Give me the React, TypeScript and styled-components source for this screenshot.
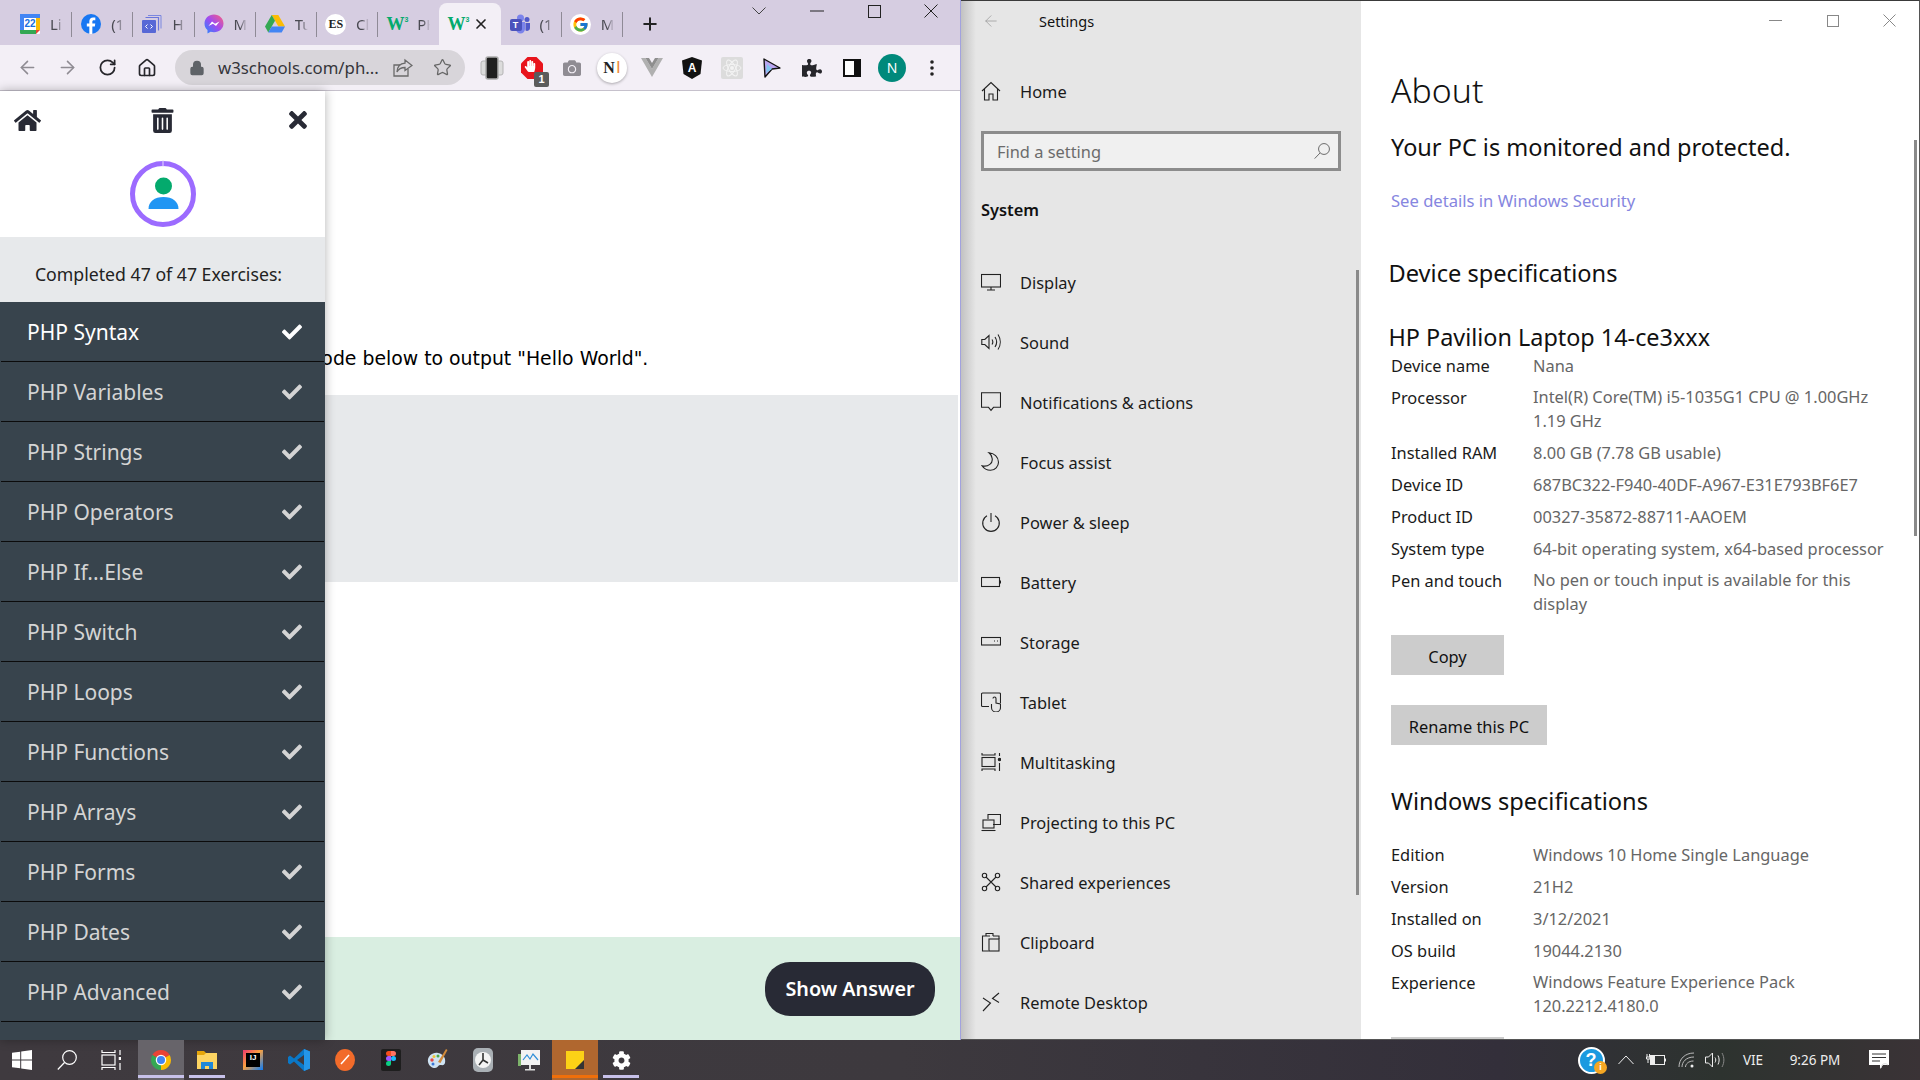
import React from "react";
import styled, { createGlobalStyle } from "styled-components";
import { FaHome, FaTrashAlt, FaTimes, FaCheck, FaPuzzlePiece, FaCamera, FaHandPaper, FaCog } from "react-icons/fa";
import { FcGoogle } from "react-icons/fc";
import { ArrowLeft, ArrowRight, RotateCw, Home as HomeLine, Star, Lock, Plus, X } from "lucide-react";

const Global = createGlobalStyle`
  html, body { margin: 0; padding: 0; background: #fff; overflow: hidden; }
  * { box-sizing: border-box; }
  #root { width: 1920px; height: 1080px; }
`;

const Screen = styled.div`
  width: 1920px; height: 1080px; display: flex; flex-direction: column; overflow: hidden;
  font-family: "Noto Sans", "Open Sans", sans-serif;
`;
const Desktop = styled.div`display: flex; height: 1040px;`;

/* ---------- Chrome ---------- */
const ChromeWindow = styled.div`
  width: 961px; flex: none; display: flex; flex-direction: column; border-right: 1px solid #a2a2de; position: relative;
`;
const TabStrip = styled.div`height: 45px; flex: none; background: #d6cde1; display: flex; padding: 3px 0 0 11px;`;
const Tab = styled.div<{ $active?: boolean }>`
  width: 61.2px; flex: none; display: flex; align-items: center; position: relative; padding-left: 9px; height: 42px;
  ${(p) => p.$active ? `background:#f3eff6; border-radius:8px 8px 0 0;` : ``}
`;
const TabDivider = styled.span`
  position: absolute; right: 0; top: 9px; height: 25px; width: 1px; background: #8f8a96;
`;
const TabIcon = styled.span`width: 20px; height: 20px; flex: none; display: flex; align-items: center; justify-content: center; position: relative;`;
const TabTitle = styled.span`
  margin-left: 10px; white-space: nowrap; font-size: 15px; color: #4a4a52;
  -webkit-mask-image: linear-gradient(to right, #000 6px, transparent 13px);
  mask-image: linear-gradient(to right, #000 6px, transparent 13px);
`;
const TabClose = styled.span`margin-left: 5px; display: flex; color: #222;`;
const NewTab = styled.span`width: 54px; display: flex; align-items: center; justify-content: center; color: #222;`;
const ChromeControls = styled.div`margin: -3px 0 0 auto; display: flex; height: 22px;`;
const ChromeControl = styled.span`width: 57.3px; display: flex; align-items: center; justify-content: center; color: #222;`;

const Toolbar = styled.div`
  height: 46px; flex: none; background: #f3eff6; border-bottom: 1px solid #c6c1cc; display: flex; align-items: center; padding-left: 7px;
`;
const ToolButton = styled.span<{ $muted?: boolean }>`
  width: 40px; height: 40px; flex: none; display: flex; align-items: center; justify-content: center; position: relative;
  color: ${(p) => (p.$muted ? "#8f8c93" : "#26262b")};
`;
const Omnibox = styled.div`
  width: 290px; height: 35px; margin: 0 7px 0 8px; border-radius: 18px; background: #d8d5da; display: flex; align-items: center; padding: 0 13px 0 14px; flex: none; color: #5f6368;
`;
const LockSlot = styled.span`width: 16px; flex: none; display: flex;`;
const Url = styled.span`flex: 1 1 0; min-width: 0; margin-left: 13px; font-size: 16.8px; color: #35353a; white-space: nowrap;`;
const OmniAction = styled.span`width: 20px; flex: none; display: flex; justify-content: center; margin-left: 19px; color: #666;`;
const Badge = styled.span`
  position: absolute; left: 22px; top: 24px; width: 15px; height: 15px; background: #5b5b5b; border-radius: 2px; color: #fff;
  font: 700 11px/15px "Liberation Sans", sans-serif; text-align: center;
`;
const NotionDisc = styled.span`
  width: 30px; height: 30px; border-radius: 50%; background: #fff; box-shadow: 0 1px 3px rgba(0,0,0,.3); display: flex; align-items: center; justify-content: center;
  font: 700 16px "Liberation Serif", serif; color: #222;
`;
const OrangeBar = styled.span`color: #f08a3c; font: 400 17px "Liberation Sans", sans-serif; margin-left: 1px;`;
const Avatar = styled.span`
  width: 28px; height: 28px; border-radius: 50%; background: #00897b; color: #fff; display: flex; align-items: center; justify-content: center; font-size: 14px;
`;

const Page = styled.div`flex: 1; display: flex; flex-direction: column; background: #fff; overflow: hidden;`;
const Instruction = styled.p`
  margin: 256px 0 24px; padding-left: 30px; height: 24px; font: 400 18.85px/24px "DejaVu Sans", sans-serif; color: #000; white-space: nowrap;
`;
const CodeBox = styled.div`height: 187px; margin-right: 2px; background: #e7e9eb; flex: none;`;
const Footer = styled.div`
  margin-top: auto; height: 103px; flex: none; background: #d9eee1; display: flex; align-items: center; justify-content: flex-end; padding-right: 25px;
`;
const AnswerButton = styled.button`
  width: 170px; height: 54px; border: 0; border-radius: 25px; background: #282a35; color: #fff; font: 600 19.8px "Noto Sans", sans-serif; padding: 0;
`;

/* ---------- W3 sidebar ---------- */
const Sidebar = styled.aside`
  position: absolute; left: 0; top: 91px; bottom: 0; width: 325px; background: #38444d; display: flex; flex-direction: column; overflow: hidden;
  box-shadow: 0 0 10px rgba(0,0,0,.3);
`;
const SideTools = styled.div`
  height: 59px; background: #fff; display: grid; grid-template-columns: 55px 1fr 55px; align-items: center; justify-items: center; color: #282a35; padding-bottom: 1px;
`;
const ProfileArea = styled.div`height: 87px; background: #fff; display: flex; justify-content: center; align-items: flex-start; padding-top: 10px;`;
const Progress = styled.div`
  height: 65px; background: #e7e9eb; display: flex; align-items: center; justify-content: center; font-size: 17.7px; color: #222; padding: 9px 8px 0 0;
`;
const Chapter = styled.div<{ $first?: boolean }>`
  height: 60px; flex: none; display: flex; align-items: center; justify-content: space-between; padding: 0 23px 1px 27px; position: relative;
  color: ${(p) => (p.$first ? "#fff" : "#d4d4d4")}; font-size: 21px;
  &::after { content: ""; position: absolute; left: 1px; right: 1px; bottom: 0; height: 1px; background: #0b0b0b; }
`;

/* ---------- Settings ---------- */
const SettingsWindow = styled.div`
  flex: 1; display: flex; border-top: 1px solid #3a3a3a; border-right: 1px solid #555; border-bottom: 1px solid #555; overflow: hidden; color: #111;
`;
const SettingsNav = styled.nav`
  width: 400px; flex: none; position: relative; overflow: hidden;
  background: linear-gradient(to right, #c2c2c2, #e6e6e6 15px);
`;
const TitleBar = styled.div`height: 41px; display: flex; align-items: center; padding: 0 0 2px 20px; font-size: 14.5px;`;
const BackArrow = styled.span`width: 58px; display: flex; color: #9a9a9a; padding-left: 1px;`;
const NavRow = styled.div`
  height: 60px; display: flex; align-items: center; padding: 0 0 2px 20px; font-size: 16.4px; color: #1a1a1a; gap: 19px;
`;
const NavGlyph = styled.svg`width: 20px; height: 20px; flex: none; margin-top: -1px; fill: none; stroke: #222; stroke-width: 1.1;`;
const HomeSlot = styled.div`margin-top: 20px;`;
const SearchBox = styled.div`
  margin: 9px 0 0 20px; width: 360px; height: 40px; border: 3px solid #8c8c8c; background: #f0f0f0; display: flex; align-items: center; justify-content: space-between; padding: 0 8px 0 13px; color: #6b6b6b; font-size: 16.4px;
`;
const SectionLabel = styled.div`margin: 19px 0 23px 20px; height: 40px; line-height: 40px; font-size: 16.4px; font-weight: 600; color: #111;`;
const NavScroll = styled.span`position: absolute; left: 395px; top: 269px; width: 3px; height: 625px; background: #8a8a8a;`;

const AboutPane = styled.main`flex: 1; background: #fff; padding-left: 30px; position: relative; overflow: hidden;`;
const WinControls = styled.div`height: 41px; display: flex; justify-content: flex-end; align-items: center; color: #8a8a8a; padding: 0 1px 2px 0;`;
const WinControl = styled.span`width: 57px; display: flex; justify-content: center;`;
const AboutTitle = styled.h1`margin: 23px 0 0; height: 50px; font-size: 33.8px; line-height: 50px; font-weight: 300; color: #111;`;
const Protected = styled.div`margin-top: 14px; height: 36px; line-height: 36px; font-size: 23.5px; color: #111;`;
const DetailsLink = styled.a`display: block; margin-top: 24px; height: 24px; line-height: 24px; font-size: 16.6px; color: #8686e0;`;
const SpecHeading = styled.h2<{ $shift?: boolean }>`
  margin: ${(p) => (p.$shift ? "42px 0 0 -2.5px" : "38px 0 0")}; height: 36px; line-height: 36px; font-size: 23.6px; font-weight: 400; color: #111;
`;
const ModelName = styled.div`margin: 28px 0 -1px -2.5px; height: 36px; line-height: 36px; font-size: 23.4px; color: #111;`;
const SpecList = styled.dl<{ $gapTop?: number }>`
  margin: ${(p) => p.$gapTop ?? 0}px 0 0; display: flex; flex-direction: column; gap: 8px;
`;
const SpecRow = styled.div`display: grid; grid-template-columns: 142px 1fr; font-size: 16.4px; line-height: 24px;`;
const SpecLabel = styled.dt`color: #1a1a1a;`;
const SpecValue = styled.dd<{ $multi?: boolean }>`margin: ${(p) => (p.$multi ? "-1px 0 0" : "0")}; color: #666;`;
const GrayButton = styled.button<{ $w: number; $top: number }>`
  display: block; width: ${(p) => p.$w}px; height: 40px; margin-top: ${(p) => p.$top}px; border: 0; background: #ccc; color: #111; font: 400 16.4px "Noto Sans", sans-serif; padding: 2px 0 0;
`;
const PaneScroll = styled.span`position: absolute; right: 2px; top: 139px; width: 3px; height: 396px; background: #8a8a8a;`;

/* ---------- Taskbar ---------- */
const Taskbar = styled.footer`
  height: 40px; flex: none; display: flex; align-items: stretch; color: #eee;
  background: linear-gradient(to right, #3f3a3f 0, #3d393e 900px, #332f3a 1500px, #2d332f 1720px, #3a3336 1920px);
`;
const SystemSlot = styled.span`width: 44.5px; display: flex; align-items: center; justify-content: center; flex: none;`;
const AppSlot = styled.span<{ $tone?: "focus" | "alert"; $running?: boolean }>`
  width: 46px; flex: none; display: flex; align-items: center; justify-content: center; position: relative;
  background: ${(p) => (p.$tone === "focus" ? "#67646a" : p.$tone === "alert" ? "#b0672f" : "transparent")};
  ${(p) => p.$running ? `&::after{content:"";position:absolute;bottom:2px;height:3px;left:${p.$tone ? 0 : 5}px;right:${p.$tone ? 0 : 5}px;background:${p.$tone === "alert" ? "#f06f0a" : "#c7c1ea"};}` : ""}
`;
const AppStrip = styled.div`display: flex; margin-left: 4.5px;`;
const Tray = styled.div`margin-left: auto; display: flex; padding-right: 11px; font-size: 13.5px;`;
const TraySlot = styled.span<{ $w: number }>`width: ${(p) => p.$w}px; display: flex; align-items: center; justify-content: center; position: relative; white-space: nowrap;`;
const HelpDisc = styled.span`
  width: 27px; height: 27px; border-radius: 50%; background: #1b9ae0; border: 2px solid #fff; color: #fff; display: flex; align-items: center; justify-content: center; font: 700 18px "Liberation Sans", sans-serif; flex: none;
`;
const HelpBadge = styled.span`
  position: absolute; left: 21px; bottom: 6px; width: 13px; height: 13px; border-radius: 50%; background: #f5a623; color: #fff; font: 700 9px/13px "Liberation Sans", sans-serif; text-align: center;
`;
const IdeTile = styled.span`
  width: 20px; height: 20px; background: linear-gradient(135deg,#f0376f,#f9a03f 45%,#087cfa); display: flex; align-items: center; justify-content: center; padding: 3px;
`;
const IdeCore = styled.span`width: 100%; height: 100%; background: #000; color: #fff; font: 700 8px/10px "Liberation Sans", sans-serif; text-align: center;`;

/* W3 / logos made of live text */
const W3Mark = styled.span`
  color: #04aa6d; font: 900 18px/20px "Liberation Serif", serif; letter-spacing: -.5px; display: flex;
`;
const W3Sup = styled.sup`font-size: 7px; line-height: 9px; margin: 1px 0 0 .5px; vertical-align: top; font-family: "Liberation Sans", sans-serif;`;
const EsDisc = styled.span`
  width: 21px; height: 21px; border-radius: 50%; background: #fff; color: #222; font: 900 12px/21px "Liberation Serif", serif; text-align: center; flex: none;
`;
const GoogleDisc = styled.span`
  width: 21px; height: 21px; border-radius: 50%; background: #fff; display: flex; align-items: center; justify-content: center; flex: none;
`;
const CalendarDay = styled.span`
  position: absolute; left: 4px; top: 4px; width: 12px; height: 12px; color: #1a6fe0; font: 700 10px/12px "Liberation Sans", sans-serif; text-align: center;
`;
const ShieldLetter = styled.span`
  position: absolute; inset: 0; display: flex; align-items: center; justify-content: center; color: #fff; font: 700 12px "Liberation Sans", sans-serif;
`;
const TeamsLetter = styled.span`
  position: absolute; left: 0; top: 5px; width: 12px; height: 12px; background: #4b53bc; border-radius: 2px; color: #fff; font: 700 9px/12px "Liberation Sans", sans-serif; text-align: center;
`;
const HandOverlay = styled.span`position: absolute; left: 12px; top: 12px; color: #fff; display: flex;`;

const CalendarIcon = () => (
  <TabIcon>
    <svg width="20" height="20" viewBox="0 0 20 20">
      <rect width="20" height="20" rx="1" fill="#fff" />
      <path d="M0 0h20v4H4v12H0z" fill="#4285f4" />
      <path d="M16 4h4v12h-4z" fill="#fbbc04" />
      <path d="M0 16h16v4H1a1 1 0 0 1-1-1z" fill="#34a853" />
      <path d="M16 16h4l-4 4z" fill="#ea4335" />
    </svg>
    <CalendarDay>22</CalendarDay>
  </TabIcon>
);
const FacebookIcon = () => (
  <TabIcon>
    <svg width="20" height="20" viewBox="0 0 24 24">
      <circle cx="12" cy="12" r="12" fill="#1877f2" />
      <path d="M13.600 24v-9h3l.5-3.600h-3.500V9.300c0-1.100.4-1.800 1.800-1.800h1.800V4.300c-.4 0-1.400-.2-2.700-.2-2.700 0-4.500 1.600-4.500 4.700v2.600H7v3.600h3V24z" fill="#fff" />
    </svg>
  </TabIcon>
);
const StackIcon = () => (
  <TabIcon>
    <svg width="20" height="20" viewBox="0 0 20 20">
      <path d="M6 1.500h13v13" fill="none" stroke="#7b87e0" strokeWidth="1" />
      <path d="M3.500 3.500h13v13" fill="none" stroke="#6a76dc" strokeWidth="1.200" />
      <rect x="0" y="6" width="14" height="13" rx="1" fill="#5868d6" />
      <path d="M5.500 10.500 3.500 12.500l2 2M8.500 10.500l2 2-2 2" fill="none" stroke="#fff" strokeWidth="1" />
    </svg>
  </TabIcon>
);
const MessengerIcon = () => (
  <TabIcon>
    <svg width="20" height="20" viewBox="0 0 20 20">
      <defs>
        <linearGradient id="msg" x1="0" y1="1" x2="1" y2="0">
          <stop offset="0" stopColor="#1e8bff" />
          <stop offset=".5" stopColor="#a04bf0" />
          <stop offset="1" stopColor="#ff5f7a" />
        </linearGradient>
      </defs>
      <path d="M10 .5C4.600.5.500 4.400.500 9.500c0 2.700 1.100 5 3 6.600V19.500l3.100-1.700c1 .3 2.200.4 3.400.4 5.400 0 9.500-3.900 9.500-8.700S15.400.5 10 .5z" fill="url(#msg)" />
      <path d="m4.500 12 3.500-4.500 3 2.300L15.500 7.500 12 12 9 9.700z" fill="#fff" />
    </svg>
  </TabIcon>
);
const DriveIcon = () => (
  <TabIcon>
    <svg width="20" height="18" viewBox="0 0 20 18">
      <path d="M6.700 0h6.600l6.700 11.500h-6.600z" fill="#fbbc04" />
      <path d="M6.700 0 0 11.500 3.300 17.500 10 5.700z" fill="#34a853" />
      <path d="M6.700 11.500H20l-3.300 6H3.300z" fill="#4285f4" />
    </svg>
  </TabIcon>
);
const W3Icon = () => (
  <TabIcon>
    <W3Mark>W<W3Sup>3</W3Sup></W3Mark>
  </TabIcon>
);
const EsIcon = () => (
  <TabIcon>
    <EsDisc>ES</EsDisc>
  </TabIcon>
);
const TeamsIcon = () => (
  <TabIcon>
    <svg width="20" height="20" viewBox="0 0 20 20">
      <circle cx="10.500" cy="4" r="3.500" fill="#7b83eb" />
      <circle cx="17" cy="5.500" r="2.500" fill="#5059c9" />
      <path d="M6 8h9v7a4.500 4.500 0 0 1-9 0z" fill="#7b83eb" />
      <path d="M15.500 9H20v5a3 3 0 0 1-4.500 2.600z" fill="#5059c9" />
    </svg>
    <TeamsLetter>T</TeamsLetter>
  </TabIcon>
);
const GoogleIcon = () => (
  <TabIcon>
    <GoogleDisc><FcGoogle size={17} /></GoogleDisc>
  </TabIcon>
);

const tabs: { icon: React.ReactNode; title?: string; active?: boolean; divider?: boolean }[] = [
  { icon: <CalendarIcon />, title: "Li", divider: true },
  { icon: <FacebookIcon />, title: "(1", divider: true },
  { icon: <StackIcon />, title: "H", divider: true },
  { icon: <MessengerIcon />, title: "M", divider: true },
  { icon: <DriveIcon />, title: "Tu", divider: true },
  { icon: <EsIcon />, title: "Cl", divider: true },
  { icon: <W3Icon />, title: "PH", divider: false },
  { icon: <W3Icon />, active: true },
  { icon: <TeamsIcon />, title: "(1", divider: true },
  { icon: <GoogleIcon />, title: "M", divider: true },
];

/* toolbar extension drawings */
const PhoneExt = () => (
  <svg width="24" height="24" viewBox="0 0 24 24">
    <rect x="1" y="5" width="22" height="14" rx="2" fill="#dcdcdc" stroke="#b5b5b5" />
    <rect x="6" y="1" width="12" height="22" rx="2" fill="#1f1f1f" stroke="#aaa" strokeWidth="1.500" />
  </svg>
);
const StopExt = () => (
  <>
    <svg width="22" height="22" viewBox="0 0 22 22">
      <path d="M6.500 0h9L22 6.500v9L15.500 22h-9L0 15.500v-9z" fill="#e8141c" />
    </svg>
    <HandOverlay><FaHandPaper size={12} /></HandOverlay>
    <Badge>1</Badge>
  </>
);
const VueExt = () => (
  <svg width="22" height="20" viewBox="0 0 22 20">
    <path d="M0 0h4.500L11 11 17.500 0H22L11 19z" fill="#b0b0b0" />
    <path d="M4.500 0H8l3 5 3-5h3.500L11 11z" fill="#8e8e8e" />
  </svg>
);
const AngularExt = () => (
  <>
    <svg width="20" height="22" viewBox="0 0 20 22">
      <path d="M10 0 20 3.500 18.500 17 10 22 1.500 17 0 3.500z" fill="#111" />
    </svg>
    <ShieldLetter>A</ShieldLetter>
  </>
);
const ReactExt = () => (
  <svg width="22" height="22" viewBox="0 0 22 22">
    <rect width="22" height="22" rx="2" fill="#dcdcdc" />
    <g fill="none" stroke="#f3f3f3" strokeWidth="1">
      <ellipse cx="11" cy="11" rx="9" ry="3.500" />
      <ellipse cx="11" cy="11" rx="9" ry="3.500" transform="rotate(60 11 11)" />
      <ellipse cx="11" cy="11" rx="9" ry="3.500" transform="rotate(120 11 11)" />
    </g>
    <circle cx="11" cy="11" r="2" fill="#f3f3f3" />
  </svg>
);
const CursorExt = () => (
  <svg width="18" height="20" viewBox="0 0 18 20">
    <path d="M1 1 17 10 9 11 2 19z" fill="#b9a6f0" stroke="#111" strokeWidth="1.400" strokeLinejoin="round" />
    <path d="M3 15 9 11 4 6z" fill="#7fc6f0" />
  </svg>
);
const SidePanelExt = () => (
  <svg width="18" height="18" viewBox="0 0 18 18">
    <rect x="1" y="1" width="16" height="16" fill="#fff" stroke="#111" strokeWidth="2" />
    <rect x="11" y="1" width="6" height="16" fill="#111" />
  </svg>
);
const DotsExt = () => (
  <svg width="4" height="16" viewBox="0 0 4 16" fill="#222">
    <circle cx="2" cy="2" r="1.800" /><circle cx="2" cy="8" r="1.800" /><circle cx="2" cy="14" r="1.800" />
  </svg>
);
const ShareGlyph = () => (
  <svg width="20" height="20" viewBox="0 0 20 20" fill="none" stroke="#6a6a6a" strokeWidth="1.300">
    <path d="M15 11v7H1V7h6" />
    <path d="M12 2l7 5.500-7 5V9.500C8 9.500 5.500 11 4 14c.3-5 3-8.500 8-8.800z" />
  </svg>
);

/* profile ring */
const ProfileRing = () => (
  <svg width="68" height="68" viewBox="0 0 68 68">
    <circle cx="34" cy="34" r="30.500" fill="none" stroke="#9c6bff" strokeWidth="5" />
    <rect x="33.500" y="0" width="1" height="7" fill="#e8dcff" />
    <circle cx="34.500" cy="26" r="8.500" fill="#04aa6d" />
    <path d="M19.500 49c0-7.500 6-12 15-12s15 4.500 15 12z" fill="#2196f3" />
  </svg>
);

/* settings nav glyphs */
const glyphs: Record<string, React.ReactNode> = {
  home: <path d="M1 10 10 1.500 19 10M3.500 8v11H8v-6h4v6h4.500V8" />,
  display: <><rect x=".5" y="2.500" width="19" height="12.500" /><path d="M10 15v2.500M6 18h8" /></>,
  sound: <><path d="M.8 7.500h3L8 3.500v13l-4.200-4h-3z" /><path d="M11 7.500c1 1.500 1 3.500 0 5M14 5c2 3 2 7 0 10M17 2.500c3 4.500 3 10.500 0 15" /></>,
  notify: <path d="M.5 .8h19v14.500h-7l-2.500 3-2.500-3h-7z" />,
  focus: <path d="M8 .8c5 .5 9.500 4 9.500 9.500 0 4-3.500 8-8 8-3.500 0-6.500-1.500-8.500-4.500 6 1.500 11.500-2.500 10-8-.5-2-1.500-3.800-3-5z" />,
  power: <><path d="M10 1v9" /><path d="M6 3.800a8.300 8.300 0 1 0 8 0" /></>,
  battery: <><rect x=".5" y="5.500" width="18" height="9" /><path d="M19.500 8.500v3" /></>,
  storage: <><rect x=".5" y="5.500" width="19" height="7.500" /><path d="M13 9h1M16 9h1" /></>,
  tablet: <><path d="M8 14.500H1.500a1 1 0 0 1-1-1V2a1 1 0 0 1 1-1h17a1 1 0 0 1 1 1v9" /><path d="M12 6.500a1.500 1.500 0 0 1 3 0V11l4.500 1v3.500a4.500 4.500 0 0 1-9 0V12" /></>,
  multi: <><path d="M1 1v2h13V1M1 19v-2h13v2" /><rect x="1" y="5.500" width="13" height="9" /><path d="M18.500 1v3M18.500 11v8" /><circle cx="18.500" cy="7.500" r="1.200" fill="#222" /></>,
  project: <><path d="M7 7V2.500h12.500v10H12" /><rect x="2" y="8" width="11" height="8" /><path d="M.5 18.500h14" /></>,
  shared: <><path d="M5 5l10 10M15 5 5 15" /><circle cx="3.500" cy="3.500" r="2.200" /><circle cx="16.500" cy="3.500" r="2.200" /><circle cx="3.500" cy="16.500" r="2.200" /><circle cx="16.500" cy="16.500" r="2.200" /></>,
  clipboard: <><path d="M9 4H1.500v15h6M5 4V1.500h7V4" /><rect x="8" y="7" width="10" height="12" /><path d="M12 4h6v3" /></>,
  remote: <path d="M2 6 9.500 11 2 19M18 1l-6.500 5.500 6.500 4" />,
};
const NavIcon = ({ name }: { name: string }) => <NavGlyph viewBox="0 0 20 20">{glyphs[name]}</NavGlyph>;

const navItems: [string, string][] = [
  ["display", "Display"], ["sound", "Sound"], ["notify", "Notifications & actions"], ["focus", "Focus assist"],
  ["power", "Power & sleep"], ["battery", "Battery"], ["storage", "Storage"], ["tablet", "Tablet"],
  ["multi", "Multitasking"], ["project", "Projecting to this PC"], ["shared", "Shared experiences"],
  ["clipboard", "Clipboard"], ["remote", "Remote Desktop"],
];
const chapters = ["PHP Syntax", "PHP Variables", "PHP Strings", "PHP Operators", "PHP If...Else", "PHP Switch", "PHP Loops", "PHP Functions", "PHP Arrays", "PHP Forms", "PHP Dates", "PHP Advanced"];

const deviceSpecs: [string, React.ReactNode, boolean?][] = [
  ["Device name", "Nana"],
  ["Processor", <>Intel(R) Core(TM) i5-1035G1 CPU @ 1.00GHz<br />1.19 GHz</>, true],
  ["Installed RAM", "8.00 GB (7.78 GB usable)"],
  ["Device ID", "687BC322-F940-40DF-A967-E31E793BF6E7"],
  ["Product ID", "00327-35872-88711-AAOEM"],
  ["System type", "64-bit operating system, x64-based processor"],
  ["Pen and touch", <>No pen or touch input is available for this<br />display</>, true],
];
const windowsSpecs: [string, React.ReactNode, boolean?][] = [
  ["Edition", "Windows 10 Home Single Language"],
  ["Version", "21H2"],
  ["Installed on", "3/12/2021"],
  ["OS build", "19044.2130"],
  ["Experience", <>Windows Feature Experience Pack<br />120.2212.4180.0</>, true],
];

const Specs = ({ rows, top }: { rows: [string, React.ReactNode, boolean?][]; top?: number }) => (
  <SpecList $gapTop={top}>
    {rows.map(([k, v, multi]) => (
      <SpecRow key={k}>
        <SpecLabel>{k}</SpecLabel>
        <SpecValue $multi={multi}>{v}</SpecValue>
      </SpecRow>
    ))}
  </SpecList>
);

/* taskbar drawings */
const WinLogo = () => (
  <svg width="20" height="20" viewBox="0 0 20 20" fill="#fff">
    <path d="M0 2.800 8.200 1.700v7.800H0zM9.200 1.500 20 0v9.500H9.200zM0 10.500h8.200v7.800L0 17.200zM9.200 10.500H20V20L9.200 18.500z" />
  </svg>
);
const SearchGlyph = ({ size = 20, color = "#fff" }: { size?: number; color?: string }) => (
  <svg width={size} height={size} viewBox="0 0 20 20" fill="none" stroke={color} strokeWidth="1.200">
    <circle cx="12.500" cy="7.500" r="6.800" /><path d="M7.500 12.500 .8 19.500" />
  </svg>
);
const TaskViewGlyph = () => (
  <svg width="20" height="20" viewBox="0 0 20 20" fill="none" stroke="#fff" strokeWidth="1.200">
    <path d="M1 0v2.500h13V0M1 20v-2.500h13V20" /><rect x="1" y="5" width="13" height="10" /><path d="M19 0v5M19 13v7" /><path d="M19 7v3" strokeWidth="2.500" />
  </svg>
);
const ChromeLogo = () => (
  <svg width="24" height="24" viewBox="0 0 48 48">
    <path d="M24 24 6.700 14A20 20 0 0 1 41.300 14z" fill="#ea4335" />
    <path d="M24 24 41.300 14A20 20 0 0 1 24 44z" fill="#fbbc04" />
    <path d="M24 24V44A20 20 0 0 1 6.700 14z" fill="#34a853" />
    <circle cx="24" cy="24" r="10.500" fill="#fff" /><circle cx="24" cy="24" r="8" fill="#4285f4" />
  </svg>
);
const FilesLogo = () => (
  <svg width="20" height="20" viewBox="0 0 20 20">
    <path d="M0 1h7l2 2h-9z" fill="#e5a50a" />
    <rect y="3" width="20" height="16" fill="#fcd462" />
    <path d="M0 3h9l-2 2H0z" fill="#e5a50a" />
    <path d="M4 19v-7h12v7h-4v-3H8v3z" fill="#1e88d8" />
  </svg>
);
const VsCodeLogo = () => (
  <svg width="22" height="22" viewBox="0 0 22 22">
    <path d="M16 0 22 2.500v17L16 22 6 12.500 2 15.500 0 14V8l2-1.500 4 3z" fill="#0a78c8" />
    <path d="M16 6 9 11l7 5z" fill="#3d3a3f" />
    <path d="M16 0 22 2.500v17L16 22z" fill="#2496e8" />
  </svg>
);
const SlashLogo = () => (
  <svg width="20" height="22" viewBox="0 0 20 22">
    <ellipse cx="10" cy="11" rx="10" ry="11" fill="#f26b2a" />
    <path d="M6 15 14 6" stroke="#fff" strokeWidth="1.500" />
  </svg>
);
const FigmaLogo = () => (
  <svg width="20" height="22" viewBox="0 0 20 22">
    <rect width="20" height="22" rx="2" fill="#1e1e1e" />
    <path d="M10 2H7.500a2.500 2.500 0 0 0 0 5H10z" fill="#f24e1e" />
    <path d="M10 2h2.500a2.500 2.500 0 0 1 0 5H10z" fill="#ff7262" />
    <path d="M10 7H7.500a2.500 2.500 0 0 0 0 5H10z" fill="#a259ff" />
    <circle cx="12.500" cy="9.500" r="2.500" fill="#1abcfe" />
    <path d="M10 12H7.500a2.500 2.500 0 1 0 2.500 2.500z" fill="#0acf83" />
  </svg>
);
const PaletteLogo = () => (
  <svg width="22" height="24" viewBox="0 0 22 24">
    <path d="M2 14C1 8 7 4 12 5c6 1 8 6 7 10-1 3-3 2-5 2-2 0-2 3-5 3-3 0-6-2-7-6z" fill="#cfe3f3" />
    <circle cx="6" cy="12" r="1.700" fill="#e24a4a" /><circle cx="8" cy="8.500" r="1.500" fill="#f0c63a" />
    <circle cx="12" cy="8" r="1.500" fill="#4aa84a" /><circle cx="7" cy="16" r="1.500" fill="#3a78d8" />
    <path d="M12 14 20 1l1.500 1-7 13z" fill="#d08a3a" />
  </svg>
);
const ClockLogo = () => (
  <svg width="20" height="24" viewBox="0 0 20 24">
    <rect width="20" height="24" rx="5" fill="#aab0b5" />
    <circle cx="10" cy="12" r="8" fill="#f4f4f4" />
    <path d="M10 12V5M10 12l5 3M10 12l-4 5" stroke="#333" strokeWidth="1.600" />
  </svg>
);
const MonitorLogo = () => (
  <svg width="22" height="22" viewBox="0 0 22 22">
    <rect x="3" y="1" width="19" height="15" fill="#f2f2f2" />
    <path d="M5 11 9 6l3 4 3-5 5 6" fill="none" stroke="#2f8fd8" strokeWidth="1.200" />
    <rect x="0" y="5" width="3" height="12" fill="#7db36a" />
    <path d="M11 16h2v4h-2zM7 20h10v1.500H7z" fill="#dcdcdc" />
  </svg>
);
const StickyLogo = () => (
  <svg width="18" height="18" viewBox="0 0 18 18">
    <rect width="18" height="18" fill="#fcd116" />
    <path d="M18 9v9H9z" fill="#333" />
  </svg>
);
const BatteryTray = () => (
  <svg width="20" height="14" viewBox="0 0 20 14" fill="none" stroke="#eee" strokeWidth="1">
    <rect x="4.500" y="2.500" width="14" height="9" /><path d="M19.500 5.500v3" />
    <rect x="4.500" y="2.500" width="4" height="9" fill="#eee" />
    <path d="M1 1v3M3.500 1v3M.5 4h3.500v2H.5zM2 6v4" />
  </svg>
);
const WifiTray = () => (
  <svg width="18" height="16" viewBox="0 0 18 16" fill="none" stroke="#bbb" strokeWidth="1">
    <path d="M1 15C1 7 7 1 16 1" /><path d="M4 15c0-5 4-10 12-10" /><path d="M7.500 15c0-3 3-6 8-6" /><circle cx="14" cy="14" r="1.500" fill="#eee" stroke="none" />
  </svg>
);
const VolumeTray = () => (
  <svg width="20" height="16" viewBox="0 0 20 16" fill="none" stroke="#eee" strokeWidth="1">
    <path d="M.5 5h3l4-4v14l-4-4h-3z" /><path d="M10 5.500c1 1.500 1 3.500 0 5M13 3.500c1.500 3 1.500 6 0 9" /><path d="M17 1c2.500 4.500 2.500 9.500 0 14" stroke="#888" />
  </svg>
);
const NotifyTray = () => (
  <svg width="20" height="20" viewBox="0 0 20 20">
    <path d="M0 0h20v15h-6l-3 4v-4H0z" fill="#fff" />
    <path d="M3 4h14M3 7.500h14M3 11h8" stroke="#333" strokeWidth="1" />
    <path d="M12 18a4 4 0 0 1 7-3" fill="none" stroke="#ddd" strokeWidth="1" />
  </svg>
);
const ChevronTray = () => (
  <svg width="16" height="10" viewBox="0 0 16 10" fill="none" stroke="#eee" strokeWidth="1"><path d="M.5 9 8 1l7.500 8" /></svg>
);

export default function App() {
  return (
    <Screen>
      <Global />
      <Desktop>
        <ChromeWindow>
          <TabStrip>
            {tabs.map((t, i) => (
              <Tab key={i} $active={t.active}>
                {t.icon}
                {t.title && <TabTitle>{t.title}</TabTitle>}
                {t.active && <TabClose><X size={16} strokeWidth={2.5} /></TabClose>}
                {t.divider && <TabDivider />}
              </Tab>
            ))}
            <NewTab><Plus size={20} strokeWidth={2.4} /></NewTab>
            <ChromeControls>
              <ChromeControl>
                <svg width="14" height="8" viewBox="0 0 14 8" fill="none" stroke="#444"><path d="M.5.500 7 7l6.500-6.500" /></svg>
              </ChromeControl>
              <ChromeControl>
                <svg width="14" height="2" viewBox="0 0 14 2" stroke="#222"><path d="M0 1h14" /></svg>
              </ChromeControl>
              <ChromeControl>
                <svg width="13" height="13" viewBox="0 0 13 13" fill="none" stroke="#222"><rect x=".5" y=".5" width="12" height="12" /></svg>
              </ChromeControl>
              <ChromeControl>
                <svg width="14" height="14" viewBox="0 0 14 14" stroke="#222"><path d="M.5.500l13 13M13.500.500l-13 13" /></svg>
              </ChromeControl>
            </ChromeControls>
          </TabStrip>
          <Toolbar>
            <ToolButton $muted><ArrowLeft size={21} strokeWidth={1.8} /></ToolButton>
            <ToolButton $muted><ArrowRight size={21} strokeWidth={1.8} /></ToolButton>
            <ToolButton><RotateCw size={19} strokeWidth={2.2} /></ToolButton>
            <ToolButton><HomeLine size={20} strokeWidth={2} /></ToolButton>
            <Omnibox>
              <LockSlot><Lock size={16} fill="#5f6368" /></LockSlot>
              <Url>w3schools.com/ph...</Url>
              <OmniAction><ShareGlyph /></OmniAction>
              <OmniAction><Star size={19} strokeWidth={1.6} /></OmniAction>
            </Omnibox>
            <ToolButton><PhoneExt /></ToolButton>
            <ToolButton><StopExt /></ToolButton>
            <ToolButton $muted><FaCamera size={18} /></ToolButton>
            <ToolButton><NotionDisc>N<OrangeBar>I</OrangeBar></NotionDisc></ToolButton>
            <ToolButton><VueExt /></ToolButton>
            <ToolButton><AngularExt /></ToolButton>
            <ToolButton><ReactExt /></ToolButton>
            <ToolButton><CursorExt /></ToolButton>
            <ToolButton><FaPuzzlePiece size={20} /></ToolButton>
            <ToolButton><SidePanelExt /></ToolButton>
            <ToolButton><Avatar>N</Avatar></ToolButton>
            <ToolButton><DotsExt /></ToolButton>
          </Toolbar>
          <Page>
            <Instruction>Insert the missing part of the code below to output "Hello World".</Instruction>
            <CodeBox />
            <Footer><AnswerButton>Show Answer</AnswerButton></Footer>
          </Page>
          <Sidebar>
            <SideTools>
              <FaHome size={27} />
              <FaTrashAlt size={25} />
              <FaTimes size={26} />
            </SideTools>
            <ProfileArea><ProfileRing /></ProfileArea>
            <Progress>Completed 47 of 47 Exercises:</Progress>
            {chapters.map((c, i) => (
              <Chapter key={c} $first={i === 0}>
                {c}
                <FaCheck size={20} />
              </Chapter>
            ))}
          </Sidebar>
        </ChromeWindow>

        <SettingsWindow>
          <SettingsNav>
            <TitleBar>
              <BackArrow><ArrowLeft size={18} strokeWidth={1} /></BackArrow>
              Settings
            </TitleBar>
            <HomeSlot>
              <NavRow><NavIcon name="home" />Home</NavRow>
            </HomeSlot>
            <SearchBox>
              Find a setting
              <SearchGlyph size={16} color="#666" />
            </SearchBox>
            <SectionLabel>System</SectionLabel>
            {navItems.map(([icon, label]) => (
              <NavRow key={label}><NavIcon name={icon} />{label}</NavRow>
            ))}
            <NavScroll />
          </SettingsNav>
          <AboutPane>
            <WinControls>
              <WinControl>
                <svg width="13" height="1" viewBox="0 0 13 1" stroke="#888"><path d="M0 .5h13" /></svg>
              </WinControl>
              <WinControl>
                <svg width="12" height="12" viewBox="0 0 12 12" fill="none" stroke="#888"><rect x=".5" y=".5" width="11" height="11" /></svg>
              </WinControl>
              <WinControl>
                <svg width="13" height="13" viewBox="0 0 13 13" stroke="#888"><path d="M.5.500l12 12M12.500.500l-12 12" /></svg>
              </WinControl>
            </WinControls>
            <AboutTitle>About</AboutTitle>
            <Protected>Your PC is monitored and protected.</Protected>
            <DetailsLink>See details in Windows Security</DetailsLink>
            <SpecHeading $shift>Device specifications</SpecHeading>
            <ModelName>HP Pavilion Laptop 14-ce3xxx</ModelName>
            <Specs rows={deviceSpecs} />
            <GrayButton $w={113} $top={19}>Copy</GrayButton>
            <GrayButton $w={156} $top={30}>Rename this PC</GrayButton>
            <SpecHeading>Windows specifications</SpecHeading>
            <Specs rows={windowsSpecs} top={24} />
            <GrayButton $w={113} $top={19}>&nbsp;</GrayButton>
            <PaneScroll />
          </AboutPane>
        </SettingsWindow>
      </Desktop>

      <Taskbar>
        <SystemSlot><WinLogo /></SystemSlot>
        <SystemSlot><SearchGlyph /></SystemSlot>
        <SystemSlot><TaskViewGlyph /></SystemSlot>
        <AppStrip>
          <AppSlot $tone="focus" $running><ChromeLogo /></AppSlot>
          <AppSlot $running><FilesLogo /></AppSlot>
          <AppSlot><IdeTile><IdeCore>IJ</IdeCore></IdeTile></AppSlot>
          <AppSlot><VsCodeLogo /></AppSlot>
          <AppSlot><SlashLogo /></AppSlot>
          <AppSlot><FigmaLogo /></AppSlot>
          <AppSlot><PaletteLogo /></AppSlot>
          <AppSlot><ClockLogo /></AppSlot>
          <AppSlot><MonitorLogo /></AppSlot>
          <AppSlot $tone="alert" $running><StickyLogo /></AppSlot>
          <AppSlot $running><FaCog size={19} color="#fff" /></AppSlot>
        </AppStrip>
        <Tray>
          <TraySlot $w={36}><HelpDisc>?</HelpDisc><HelpBadge>i</HelpBadge></TraySlot>
          <TraySlot $w={34}><ChevronTray /></TraySlot>
          <TraySlot $w={26}><BatteryTray /></TraySlot>
          <TraySlot $w={36}><WifiTray /></TraySlot>
          <TraySlot $w={20}><VolumeTray /></TraySlot>
          <TraySlot $w={56}>VIE</TraySlot>
          <TraySlot $w={68}>9:26 PM</TraySlot>
          <TraySlot $w={60}><NotifyTray /></TraySlot>
        </Tray>
      </Taskbar>
    </Screen>
  );
}
